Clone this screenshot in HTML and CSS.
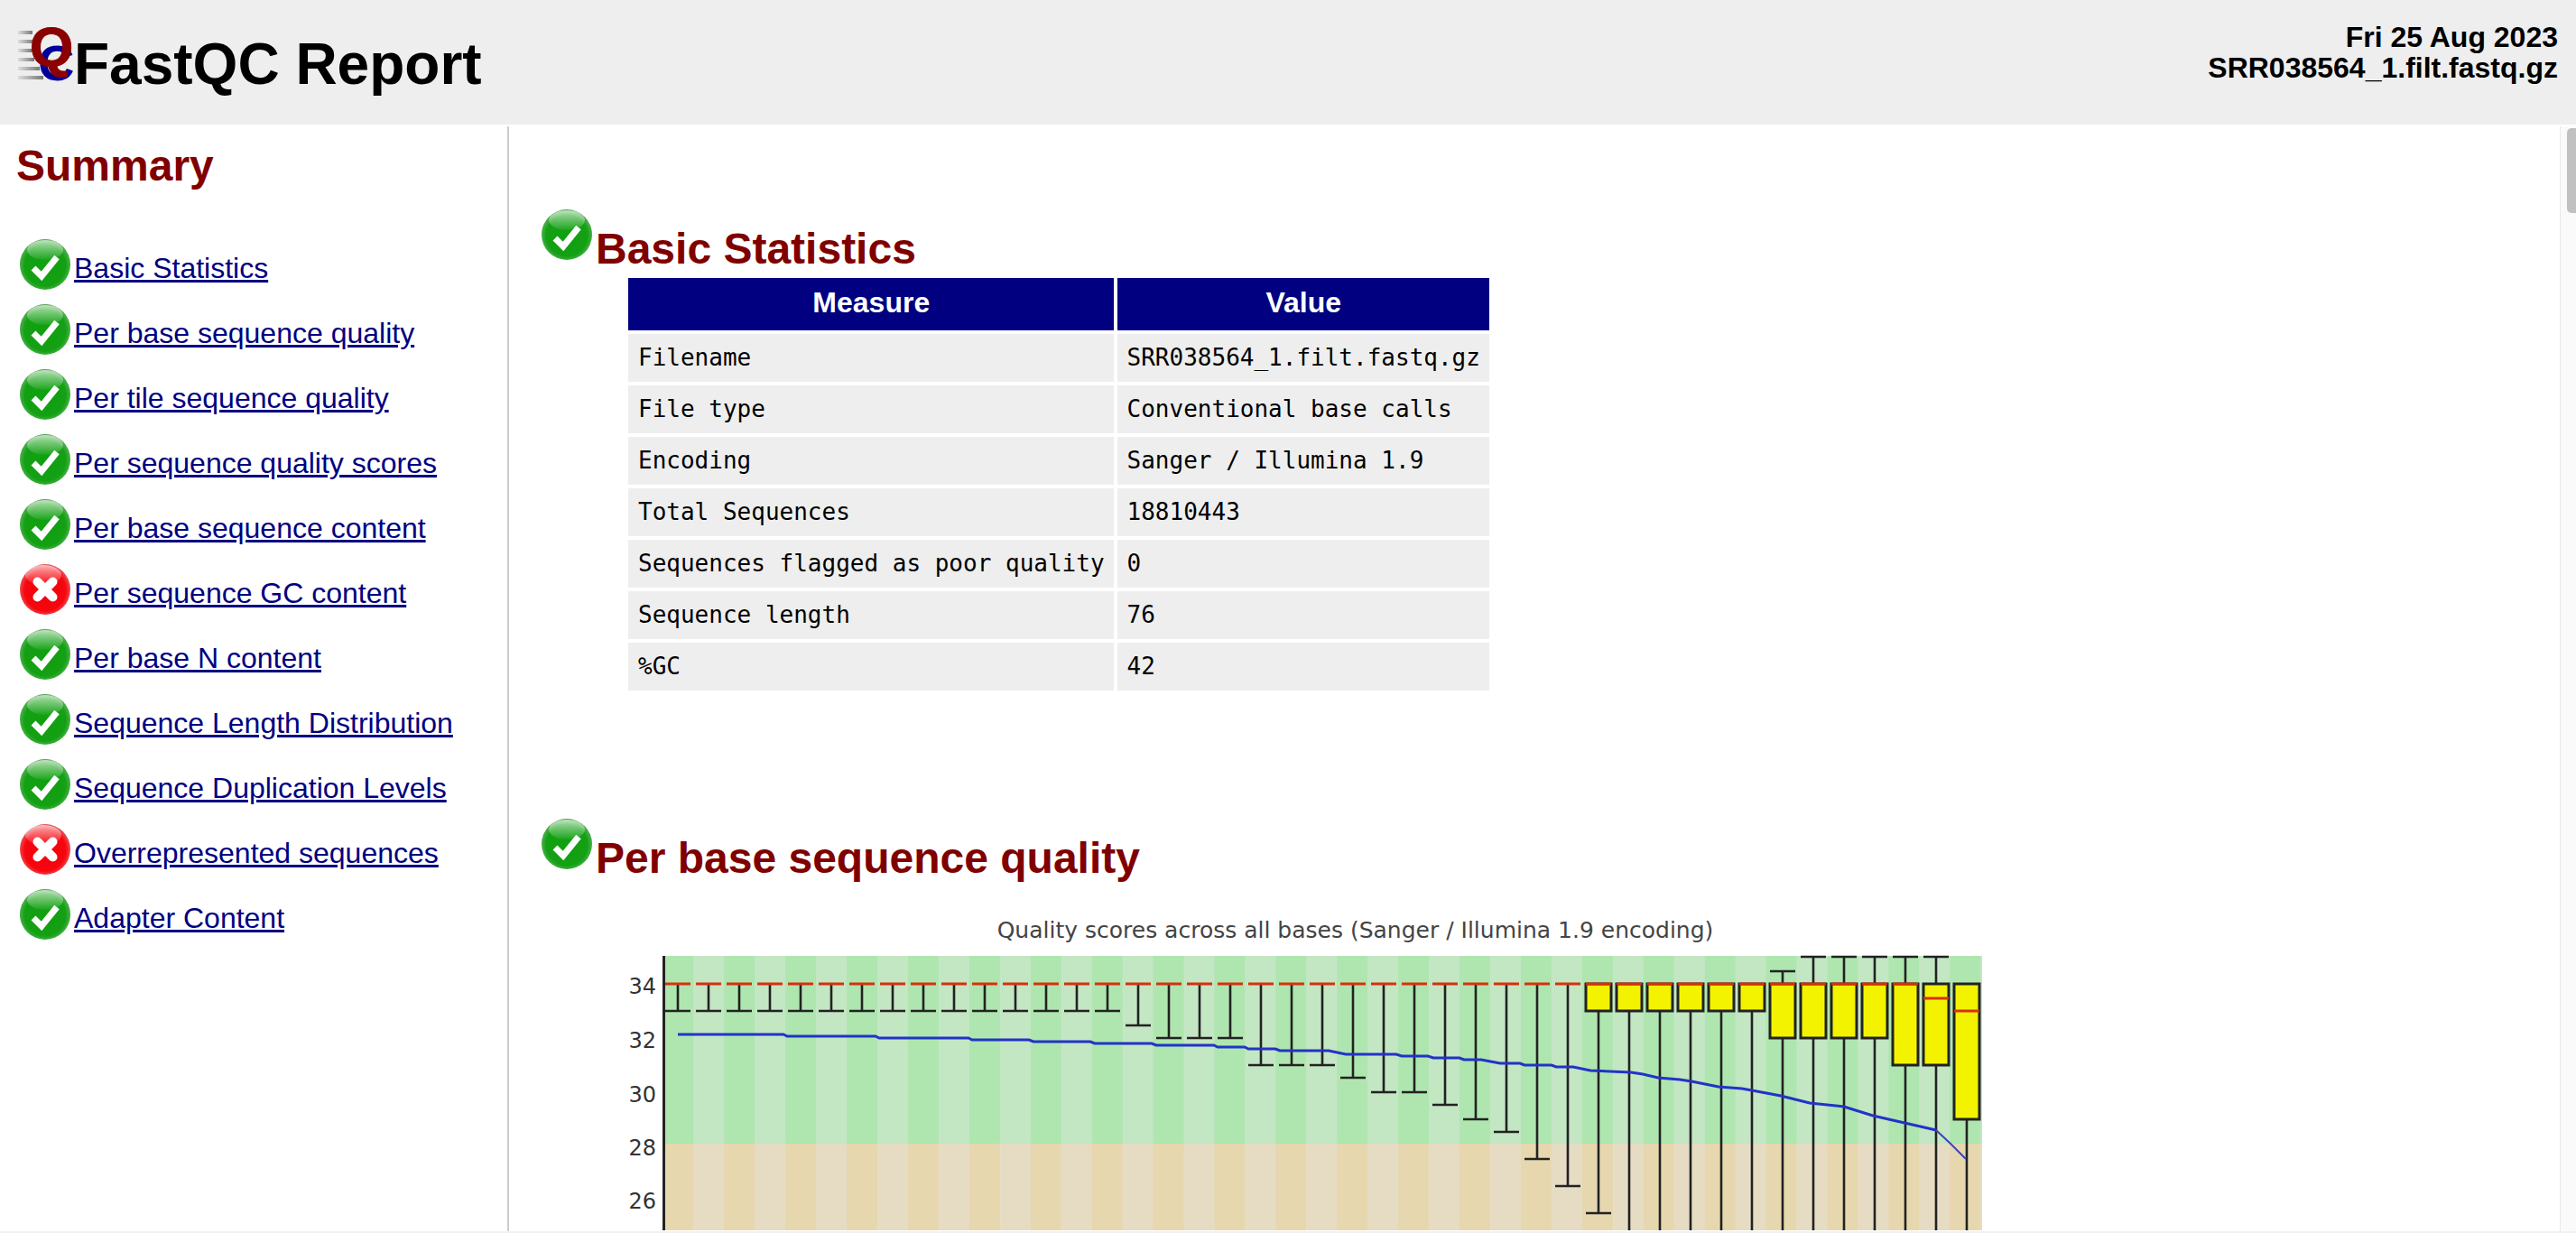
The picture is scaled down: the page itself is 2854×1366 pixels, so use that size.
FILE: index.html
```html
<!DOCTYPE html>
<html>
  <head>
    <title>FastQC Report</title>
    <link rel="stylesheet" href="styles.css">
  </head>
  <body>
    <!-- shared status icons -->
    <svg class="defs">
      <defs>
        <radialGradient id="greenBall" cx="50%" cy="52%" r="52%">
          <stop offset="0" stop-color="#0fa00f" />
          <stop offset="0.78" stop-color="#14a014" />
          <stop offset="0.93" stop-color="#3fae3f" />
          <stop offset="1" stop-color="#4d9a4d" />
        </radialGradient>
        <radialGradient id="redBall" cx="50%" cy="52%" r="52%">
          <stop offset="0" stop-color="#f4000c" />
          <stop offset="0.78" stop-color="#f6060f" />
          <stop offset="0.93" stop-color="#f23a40" />
          <stop offset="1" stop-color="#d85a5a" />
        </radialGradient>
        <linearGradient id="gloss" x1="0" y1="0" x2="0" y2="1">
          <stop offset="0" stop-color="#fff" stop-opacity="0.65" />
          <stop offset="1" stop-color="#fff" stop-opacity="0.05" />
        </linearGradient>
        <linearGradient id="speed" x1="0" y1="0" x2="1" y2="0">
          <stop offset="0" stop-color="#ddd" />
          <stop offset="1" stop-color="#777" />
        </linearGradient>
        <pattern id="greenStripes" x="734.4" y="0" width="67.9" height="10" patternUnits="userSpaceOnUse">
          <rect width="34" height="10" fill="#afe6af" />
          <rect x="34" width="34" height="10" fill="#c3e6c3" />
        </pattern>
        <pattern id="orangeStripes" x="734.4" y="0" width="67.9" height="10" patternUnits="userSpaceOnUse">
          <rect width="34" height="10" fill="#e6d7af" />
          <rect x="34" width="34" height="10" fill="#e6dcc3" />
        </pattern>
      </defs>
      <symbol id="tick" viewBox="0 0 64 64">
        <circle cx="32" cy="32" r="28" fill="url(#greenBall)" />
        <ellipse cx="32" cy="16" rx="20" ry="11" fill="url(#gloss)" />
        <path d="M19 36 L28 45 L45 24" fill="none" stroke="#fff" stroke-width="7" />
      </symbol>
      <symbol id="cross" viewBox="0 0 64 64">
        <circle cx="32" cy="32" r="28" fill="url(#redBall)" />
        <ellipse cx="30" cy="16" rx="20" ry="11" fill="url(#gloss)" />
        <path d="M23.500 23.500 L40.500 40.500 M40.500 23.500 L23.500 40.500" fill="none" stroke="#fff" stroke-width="10" stroke-linecap="round" />
      </symbol>
    </svg>

    <div class="header">
      <div class="title">
        <svg class="logo" viewBox="0 0 64 70">
          <rect x="2" y="10" width="16" height="4" fill="url(#speed)" />
          <rect x="2" y="20" width="18" height="4" fill="url(#speed)" />
          <rect x="2" y="30" width="16" height="4" fill="url(#speed)" />
          <rect x="2" y="40" width="18" height="4" fill="url(#speed)" />
          <rect x="2" y="50" width="24" height="4" fill="url(#speed)" />
          <rect x="2" y="60" width="28" height="4" fill="url(#speed)" />
          <text class="logoC" x="24" y="65">C</text>
          <text class="logoQ" x="15" y="49">Q</text>
        </svg>
        <span>FastQC Report</span>
      </div>
      <div class="fileinfo">
        <div>Fri 25 Aug 2023</div>
        <div>SRR038564_1.filt.fastq.gz</div>
      </div>
    </div>

    <div class="content">
      <div class="summary">
        <h2>Summary</h2>
        <ul>
          <li><svg class="icon"><use href="#tick" /></svg><a href="#M0">Basic Statistics</a></li>
          <li><svg class="icon"><use href="#tick" /></svg><a href="#M1">Per base sequence quality</a></li>
          <li><svg class="icon"><use href="#tick" /></svg><a href="#M2">Per tile sequence quality</a></li>
          <li><svg class="icon"><use href="#tick" /></svg><a href="#M3">Per sequence quality scores</a></li>
          <li><svg class="icon"><use href="#tick" /></svg><a href="#M4">Per base sequence content</a></li>
          <li><svg class="icon"><use href="#cross" /></svg><a href="#M5">Per sequence GC content</a></li>
          <li><svg class="icon"><use href="#tick" /></svg><a href="#M6">Per base N content</a></li>
          <li><svg class="icon"><use href="#tick" /></svg><a href="#M7">Sequence Length Distribution</a></li>
          <li><svg class="icon"><use href="#tick" /></svg><a href="#M8">Sequence Duplication Levels</a></li>
          <li><svg class="icon"><use href="#cross" /></svg><a href="#M9">Overrepresented sequences</a></li>
          <li><svg class="icon"><use href="#tick" /></svg><a href="#M10">Adapter Content</a></li>
        </ul>
      </div>

      <div class="main">
        <div class="module" id="M0">
          <h2><svg class="icon"><use href="#tick" /></svg>Basic Statistics</h2>
          <table>
            <thead>
              <tr><th>Measure</th><th>Value</th></tr>
            </thead>
            <tbody>
              <tr><td>Filename</td><td>SRR038564_1.filt.fastq.gz</td></tr>
              <tr><td>File type</td><td>Conventional base calls</td></tr>
              <tr><td>Encoding</td><td>Sanger / Illumina 1.9</td></tr>
              <tr><td>Total Sequences</td><td>18810443</td></tr>
              <tr><td>Sequences flagged as poor quality</td><td>0</td></tr>
              <tr><td>Sequence length</td><td>76</td></tr>
              <tr><td>%GC</td><td>42</td></tr>
            </tbody>
          </table>
        </div>

        <div class="module module2" id="M1">
          <h2><svg class="icon"><use href="#tick" /></svg>Per base sequence quality</h2>
          <svg class="chart" viewBox="680 1010 1540 354">
            <text class="chartTitle" x="1501.500" y="1040">Quality scores across all bases (Sanger / Illumina 1.9 encoding)</text>

            <rect x="735" y="1060" width="1461" height="208" fill="url(#greenStripes)" />
            <rect x="735" y="1268" width="1461" height="96" fill="url(#orangeStripes)" />
            <path d="M735.500 1060V1364" class="axis" />
            <text class="tick" x="727" y="1102">34</text>
            <text class="tick" x="727" y="1162">32</text>
            <text class="tick" x="727" y="1222">30</text>
            <text class="tick" x="727" y="1281">28</text>
            <text class="tick" x="727" y="1340">26</text>

            <!-- whiskers, bottom caps first then stems -->
            <path class="whisker" d="M737 1121H1241" stroke-dasharray="28 6" />
            <path class="whisker" d="M1247 1137h28M1281 1151h28M1315 1151h28M1349 1151h28M1383 1181h28M1417 1181h28M1451 1181h28M1485 1195h28M1519 1211h28M1553 1211h28M1587 1225h28M1621 1241h28M1655 1255h28M1689 1285h28M1723 1315h28M1757 1345h28" />
            <path class="whisker" d="M751 1091V1121M785 1091V1121M819 1091V1121M853 1091V1121M887 1091V1121M921 1091V1121M955 1091V1121M989 1091V1121M1023 1091V1121M1057 1091V1121M1091 1091V1121M1125 1091V1121M1159 1091V1121M1193 1091V1121M1227 1091V1121M1261 1091V1137M1295 1091V1151M1329 1091V1151M1363 1091V1151M1397 1091V1181M1431 1091V1181M1465 1091V1181M1499 1091V1195M1533 1091V1211M1567 1091V1211M1601 1091V1225M1635 1091V1241M1669 1091V1255M1703 1091V1285M1737 1091V1315M1771 1121V1345M1805 1121V1364M1839 1121V1364M1873 1121V1364M1907 1121V1364M1941 1121V1364M1975 1151V1364M2009 1151V1364M2043 1151V1364M2077 1151V1364M2111 1181V1364M2145 1181V1364M2179 1241V1364" />
            <path class="whisker" d="M1975 1077V1091M1961 1077h28M2009 1061V1091M1995 1061h28M2043 1061V1091M2029 1061h28M2077 1061V1091M2063 1061h28M2111 1061V1091M2097 1061h28M2145 1061V1091M2131 1061h28" />

            <g class="box">
              <rect x="1757" y="1091" width="28" height="30" />
              <rect x="1791" y="1091" width="28" height="30" />
              <rect x="1825" y="1091" width="28" height="30" />
              <rect x="1859" y="1091" width="28" height="30" />
              <rect x="1893" y="1091" width="28" height="30" />
              <rect x="1927" y="1091" width="28" height="30" />
              <rect x="1961" y="1091" width="28" height="60" />
              <rect x="1995" y="1091" width="28" height="60" />
              <rect x="2029" y="1091" width="28" height="60" />
              <rect x="2063" y="1091" width="28" height="60" />
              <rect x="2097" y="1091" width="28" height="90" />
              <rect x="2131" y="1091" width="28" height="90" />
              <rect x="2165" y="1091" width="28" height="150" />
            </g>

            <!-- medians -->
            <path class="median" d="M737 1091H2125" stroke-dasharray="28 6" />
            <path class="median" d="M2131 1107h28M2165 1121h28" />

            <!-- mean line -->
            <polyline class="mean" points="751,1147 868,1147 872,1149 970,1149 974,1151 1073,1151 1077,1153 1140,1153 1145,1155 1208,1155 1213,1157 1276,1157 1281,1159 1345,1159 1349,1161 1379,1161 1383,1163 1413,1163 1418,1165 1472,1165 1491,1169 1547,1169 1553,1171 1582,1171 1588,1173 1617,1173 1622,1175 1641,1175 1662,1179 1684,1179 1689,1181 1719,1181 1724,1183 1743,1183 1762,1187 1807,1189 1820,1191 1837,1195 1861,1197 1874,1199 1904,1205 1930,1207 1941,1209 1973,1215 2005,1223 2043,1227 2075,1237 2110,1245 2145,1253" />
            <polyline class="meanEnd" points="2145,1253 2161,1268 2178,1285" />
          </svg>
        </div>
      </div>

      <div class="scrolltrack"><div class="scrollthumb"></div></div>
    </div>
    <div class="bottomstrip"></div>
  </body>
</html>
```

FILE: styles.css
```css
html, body {
  height: 100%;
}

body {
  margin: 0;
  padding: 0;
  background: #fff;
  color: #000;
  font-family: "Liberation Sans", Arial, sans-serif;
  font-size: 32px;
  display: flex;
  flex-direction: column;
  overflow: hidden;
}

.defs {
  display: block;
  width: 0;
  height: 0;
}

/* Top banner */
.header {
  height: 138px;
  flex: none;
  background: #eee;
  display: flex;
  justify-content: space-between;
  align-items: flex-start;
}

.title {
  display: flex;
  align-items: flex-end;
  margin-left: 18px;
  height: 110px;
  font-size: 64px;
  font-weight: bold;
  line-height: 74px;
}

.title span {
  margin-bottom: 2px;
}

.logo {
  width: 64px;
  height: 70px;
  margin-bottom: 16px;
  overflow: visible;
}

.logoQ {
  font: bold 62px "Liberation Sans", sans-serif;
  fill: #8b0000;
  stroke: #8b0000;
  stroke-width: 1;
}

.logoC {
  font: bold 56px "Liberation Sans", sans-serif;
  fill: #000099;
}

.fileinfo {
  margin: 25px 20px 0 0;
  text-align: right;
  font-weight: bold;
  line-height: 33.500px;
}

/* Below the banner */
.content {
  flex: 1;
  min-height: 0;
  margin-top: 2px;
  display: flex;
}

.summary {
  width: 562px;
  flex: none;
  border-right: 2px solid #ccc;
}

h2 {
  margin: 0;
  color: #800000;
  font-size: 48px;
  font-weight: bold;
}

.summary h2 {
  margin: 16px 0 0 18px;
  line-height: 55px;
}

.summary ul {
  list-style: none;
  margin: 50px 0 0 18px;
  padding: 0;
}

.summary li {
  display: flex;
  height: 72px;
  line-height: 36px;
}

.summary a {
  margin-top: 18px;
}

a {
  color: #000080;
}

.icon {
  width: 64px;
  height: 64px;
  flex: none;
}

.main {
  flex: 1;
  min-width: 0;
  overflow: hidden;
  padding-left: 32px;
}

.module {
  padding-top: 88px;
}

.module2 {
  padding-top: 134px;
}

.module h2 {
  line-height: 64px;
}

table {
  border-collapse: separate;
  border-spacing: 4px;
  margin: -4px 0 0 96px;
}

th {
  background: #000080;
  color: #fff;
  font-size: 32px;
  font-weight: bold;
  padding: 8px 10px 12px 11px;
  line-height: 38px;
}

td {
  background: #eee;
  font-family: "DejaVu Sans Mono", monospace;
  font-size: 26px;
  padding: 10px 10px 10px 11px;
  line-height: 33px;
}

/* Chart */
.chart {
  display: block;
  width: 1540px;
  height: 354px;
  margin: 26px 0 0 84px;
}

.chart text {
  font-family: "DejaVu Sans", sans-serif;
}

.chartTitle {
  font-size: 25px;
  fill: #444;
  text-anchor: middle;
}

.tick {
  font-size: 24px;
  fill: #333;
  text-anchor: end;
}

.axis {
  stroke: #222;
  stroke-width: 3;
  fill: none;
}

.whisker {
  stroke: #222;
  stroke-width: 2.600;
  fill: none;
}

.box rect {
  fill: #f3f300;
  stroke: #222;
  stroke-width: 3;
}

.median {
  stroke: #d8300c;
  stroke-width: 3;
  fill: none;
}

.mean {
  stroke: #2233c8;
  stroke-width: 3;
  fill: none;
}

.meanEnd {
  stroke: #3a44b8;
  stroke-width: 2;
  fill: none;
}

/* Fake scrollbars from the captured window */
.scrolltrack {
  width: 17px;
  flex: none;
  background: #fafafa;
  border-left: 1px solid #e8e8e8;
}

.scrollthumb {
  width: 10px;
  height: 94px;
  margin: 2px 0 0 7px;
  background: #c1c1c1;
  border-radius: 5px 0 0 5px;
}

.bottomstrip {
  height: 2px;
  flex: none;
  background: #f1f1f1;
}
```
